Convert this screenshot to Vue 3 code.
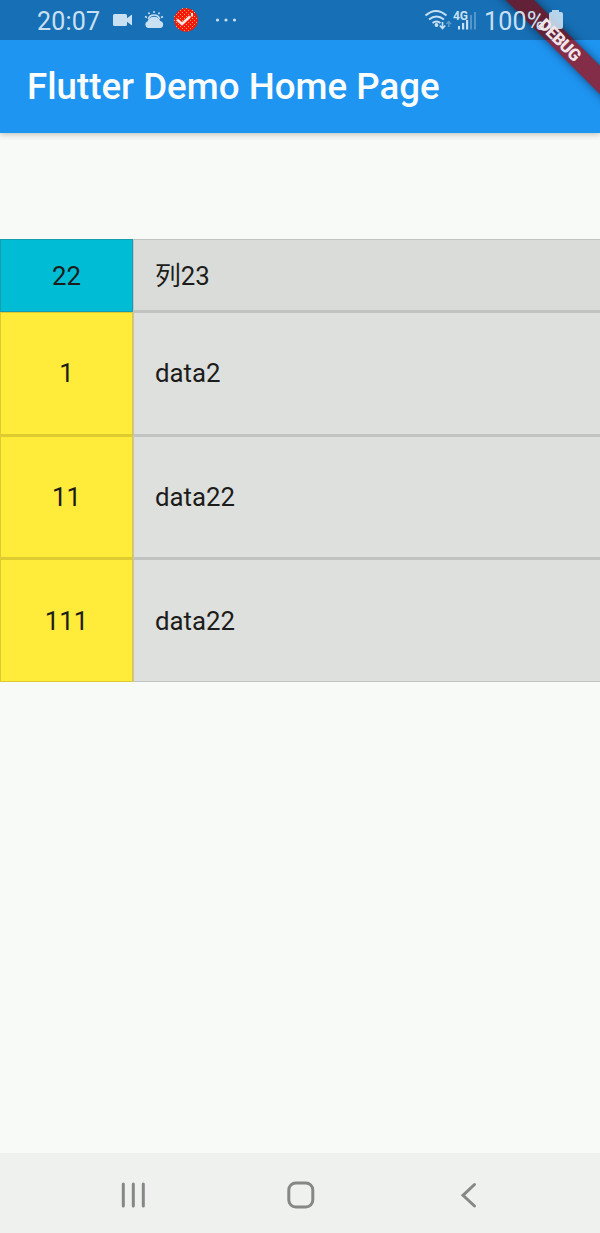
<script setup>
const rows = [
  { id: '1', text: 'data2' },
  { id: '11', text: 'data22' },
  { id: '111', text: 'data22' },
]
const dots = []
for (let y = 0; y < 12; y++) for (let x = 0; x < 12; x++) {
  if ((x + y) % 2 === 0 && Math.hypot(x - 5.5, y - 5.5) < 6) dots.push([x * 2, y * 2])
}
</script>

<template>
  <div class="screen">
    <header class="appbar">
      <h1>Flutter Demo Home Page</h1>
    </header>
    <div class="corner"><div class="banner"></div></div>
    <div class="status">
      <svg width="600" height="40" viewBox="0 0 600 40">
        <g fill="#c9e0f2">
          <text x="37" y="29.5" font-size="25" textLength="63">20:07</text>
          <text x="484" y="29.5" font-size="25" textLength="61">100%</text>
          <rect x="113" y="14" width="14" height="12" rx="1.5" />
          <path d="M126 19L132 14.5V25.5L126 21Z" />
          <path d="M148 28a3.500 3.500 0 0 1-.4-6.700 6.800 6.800 0 0 1 12.700-.3 3.600 3.600 0 0 1 .2 7z" />
          <circle cx="217.500" cy="20" r="1.600" /><circle cx="226" cy="20" r="1.600" /><circle cx="234.500" cy="20" r="1.600" />
          <path d="M552 10h7v2h2q2 0 2 2v13q0 2-2 2h-10q-2 0-2-2v-13q0-2 2-2h1z" opacity=".9" />
        </g>
        <path d="M148.200 19a6.200 6.200 0 0 1 11.600 0" fill="none" stroke="#c9e0f2" stroke-width="1.500" />
        <path d="M154 11v2M148.500 12.500l1 1.700M159.500 12.500l-1 1.700M145 16.500l2 1M163 16.500l-2 1" stroke="#c9e0f2" stroke-width="1.500" />
        <circle cx="186" cy="20" r="11.800" fill="#f8170c" />
        <g fill="#e8b048" transform="translate(174 8)"><rect v-for="(d, i) in dots" :key="i" :x="d[0]" :y="d[1]" width="1" height="1" /></g>
        <path d="M177 19.500l5 4.500 8-7.500" fill="none" stroke="#f2e6df" stroke-width="2.600" />
        <path d="M192 13v3.500" stroke="#f2e6df" stroke-width="2" />
        <g fill="none" stroke="#c9e0f2" stroke-width="2">
          <path d="M425.500 15.500q10.500-9 21 0M429 19.500q7.500-6 15 0M432.500 23q4-3 8 0" />
          <path d="M442.500 22v6M439.800 25.500l2.700 3 2.700-3" stroke-width="1.600" />
          <path d="M448.800 27v-5M446.500 24l2.300-2.500 2.300 2.500" stroke-width="1.500" opacity=".4" />
        </g>
        <circle cx="436.500" cy="25" r="1.900" fill="#c9e0f2" />
        <text x="453" y="19.500" font-size="12" font-weight="700" fill="#c9e0f2" textLength="15">4G</text>
        <g fill="#c9e0f2"><rect x="458" y="26" width="2" height="3.500" /><rect x="462" y="23" width="2.200" height="6.500" /><rect x="466" y="20" width="2.200" height="9.500" /><rect x="470" y="15" width="2" height="14.500" opacity=".35" /><rect x="474" y="12" width="2" height="17.500" opacity=".35" /></g>
      </svg>
    </div>
    <div class="corner"><div class="label"><svg width="120" height="20"><text x="60" y="16" text-anchor="middle" textLength="52">DEBUG</text></svg></div></div>
    <main>
      <div class="row head">
        <div class="key">22</div>
        <div class="val">列23</div>
      </div>
      <div v-for="r in rows" :key="r.id" class="row">
        <div class="key">{{ r.id }}</div>
        <div class="val">{{ r.text }}</div>
      </div>
    </main>
    <nav>
      <svg width="600" height="80" viewBox="0 0 600 80" fill="none" stroke="#868886" stroke-width="3" stroke-linecap="round">
        <path d="M123.300 31v22M133.300 31v22M143.300 31v22" />
        <rect x="288.800" y="30" width="24" height="24" rx="7" />
        <path d="M474.500 31.500L463 42.300L474.500 53" />
      </svg>
    </nav>
  </div>
</template>

<style>
body { margin: 0; }
</style>

<style scoped>
.screen {
  position: relative;
  display: flex;
  flex-direction: column;
  width: 600px;
  height: 1233px;
  overflow: hidden;
  background: #f8faf8;
  color: #1c1c1b;
  font-family: Roboto, "Noto Sans CJK SC", sans-serif;
}
.appbar {
  box-sizing: border-box;
  height: 133px;
  flex: none;
  padding: 40px 27px 0;
  display: flex;
  align-items: center;
  background: #1f95f2;
  box-shadow: 0 1px 6px rgba(60, 40, 20, .32);
}
h1 {
  margin: 0;
  color: #fafdfb;
  font-size: 36.7px;
  line-height: 43px;
  font-weight: 500;
  white-space: nowrap;
}
.corner {
  position: absolute;
  top: 0;
  right: 0;
  width: 150px;
  height: 133px;
  overflow: hidden;
}
.banner, .label {
  position: absolute;
  left: 10px;
  top: 30px;
  width: 200px;
  height: 20px;
  display: flex;
  justify-content: center;
  transform: rotate(45deg);
}
.banner {
  background: #832d48;
  box-shadow: 0 0 10px rgba(0, 0, 0, .5);
}
.label text {
  font-size: 17px;
  font-weight: 900;
  fill: #f0e6e9;
}
.status {
  position: absolute;
  inset: 0 0 auto;
  height: 40px;
  background: rgba(0, 0, 0, .25);
}
.status svg, .label svg, nav svg { display: block; }
main { margin-top: 106px; flex: 1; }
.row {
  display: flex;
  height: 123.300px;
  font-size: 25.800px;
}
.head { height: 73.300px; }
.key, .val {
  box-sizing: border-box;
  display: flex;
  align-items: center;
}
.key {
  width: 133px;
  justify-content: center;
  background: #ffeb3a;
  border: solid #decb30;
  border-width: 1px 1px 2px;
}
.val {
  flex: 1;
  padding-left: 21px;
  background: #dee0de;
  border: solid #c1c3c1;
  border-width: 1px 0 2px 1px;
}
.head .key {
  background: #00bcd4;
  border-color: #199cae;
  border-bottom-width: 1px;
}
.head .val {
  padding-bottom: 3px;
  background: #dadcda;
}
.row:last-child .key, .row:last-child .val { border-bottom-width: 1px; }
nav {
  height: 80px;
  flex: none;
  background: #eff1ef;
}
</style>
